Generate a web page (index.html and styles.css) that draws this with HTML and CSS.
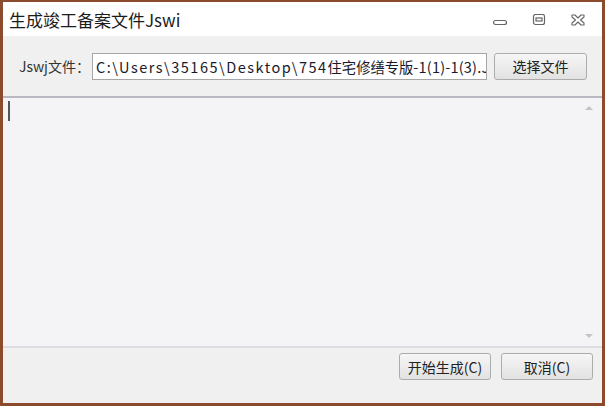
FILE: index.html
```html
<!DOCTYPE html>
<html lang="zh-CN">
<head>
  <meta charset="UTF-8">
  <title>生成竣工备案文件Jswi</title>
  <link rel="stylesheet" href="styles.css">
</head>
<body>
  <div class="window">
    <div class="titlebar">
      <div class="title">生成竣工备案文件Jswi</div>
      <div class="controls">
        <svg class="ctl" width="16" height="12" viewBox="0 0 16 12">
          <rect x="1.5" y="6.5" width="13" height="4" rx="2" fill="none" stroke="#666" stroke-width="1.2"/>
        </svg>
        <svg class="ctl" width="16" height="12" viewBox="0 0 16 12">
          <rect x="2.5" y="0.5" width="11" height="10" rx="2" fill="none" stroke="#666" stroke-width="1.2"/>
          <rect x="5" y="4" width="6" height="3" fill="none" stroke="#666" stroke-width="1.2"/>
        </svg>
        <svg class="ctl" width="16" height="12" viewBox="0 0 16 12">
          <path d="M2 1 L5 1 L8 4 L11 1 L14 1 L14 3 L10.5 6 L14 9 L14 11 L11 11 L8 8 L5 11 L2 11 L2 9 L5.5 6 L2 3 Z" fill="none" stroke="#666" stroke-width="1.1" stroke-linejoin="round"/>
        </svg>
      </div>
    </div>

    <div class="toolbar">
      <label class="label">Jswj文件：</label>
      <div class="path">C:\Users\35165\Desktop\754<span class="cjk">住宅修缮专版</span><span class="tail">-1(1)-1(3).Jswj</span></div>
      <button class="btn pick">选择文件</button>
    </div>

    <div class="editor">
      <span class="caret"></span>
      <span class="arrow up"></span>
      <span class="arrow down"></span>
    </div>

    <div class="footer">
      <button class="btn">开始生成(C)</button>
      <button class="btn">取消(C)</button>
    </div>
  </div>
</body>
</html>
```

FILE: styles.css
```css
* {
  box-sizing: border-box;
  font-family: "Noto Sans CJK SC", "Liberation Sans", sans-serif;
}

body {
  margin: 0;
  width: 605px;
  height: 406px;
  overflow: hidden;
}

.window {
  display: flex;
  flex-direction: column;
  height: 406px;
  border: 3px solid #8c4b2d;
  border-top-width: 2px;
  background: #f0f0f0;
}

.titlebar {
  height: 34px;
  background: #fff;
  display: flex;
  align-items: center;
  justify-content: space-between;
  padding: 0 16px 0 6px;
}

.title {
  font-size: 17px;
  color: #1c1c1c;
  padding-top: 1px;
}

.controls {
  display: flex;
  gap: 23px;
  padding-top: 1px;
}

.toolbar {
  height: 60px;
  display: flex;
  align-items: center;
  padding: 0 15px 0 16px;
}

.label {
  font-size: 14px;
  color: #333;
  width: 73px;
}

.path {
  width: 395px;
  height: 27px;
  border: 1px solid #a6a6a6;
  background: #fff;
  font-size: 14.5px;
  letter-spacing: 1.5px;
  line-height: 25px;
  padding-left: 3px;
  white-space: nowrap;
  overflow: hidden;
  color: #1a1a2a;
}

.path .cjk {
  font-size: 14.3px;
  letter-spacing: 0;
}

.path .tail {
  letter-spacing: 0.2px;
}

.btn {
  height: 27px;
  border: 1px solid #acacac;
  border-radius: 3px;
  background: linear-gradient(#f6f6f6, #e2e2e2);
  font-size: 14px;
  color: #222;
  padding: 0;
}

.pick {
  width: 93px;
  margin-left: 7px;
}

.editor {
  position: relative;
  height: 252px;
  background: #f4f4f6;
  border-top: 2px solid #b8b8c0;
  border-bottom: 2px solid #dcdce2;
}

.caret {
  position: absolute;
  left: 5px;
  top: 3px;
  width: 2px;
  height: 20px;
  background: #555;
}

.arrow {
  position: absolute;
  right: 9px;
  width: 0;
  height: 0;
  border-left: 4px solid transparent;
  border-right: 4px solid transparent;
}

.arrow.up {
  top: 8px;
  border-bottom: 4px solid #c4c4c8;
}

.arrow.down {
  bottom: 8px;
  border-top: 4px solid #c4c4c8;
}

.footer {
  flex: 1;
  display: flex;
  justify-content: flex-end;
  align-items: flex-start;
  gap: 10px;
  padding: 5px 9px 0 0;
}

.footer .btn {
  width: 92px;
}
```
